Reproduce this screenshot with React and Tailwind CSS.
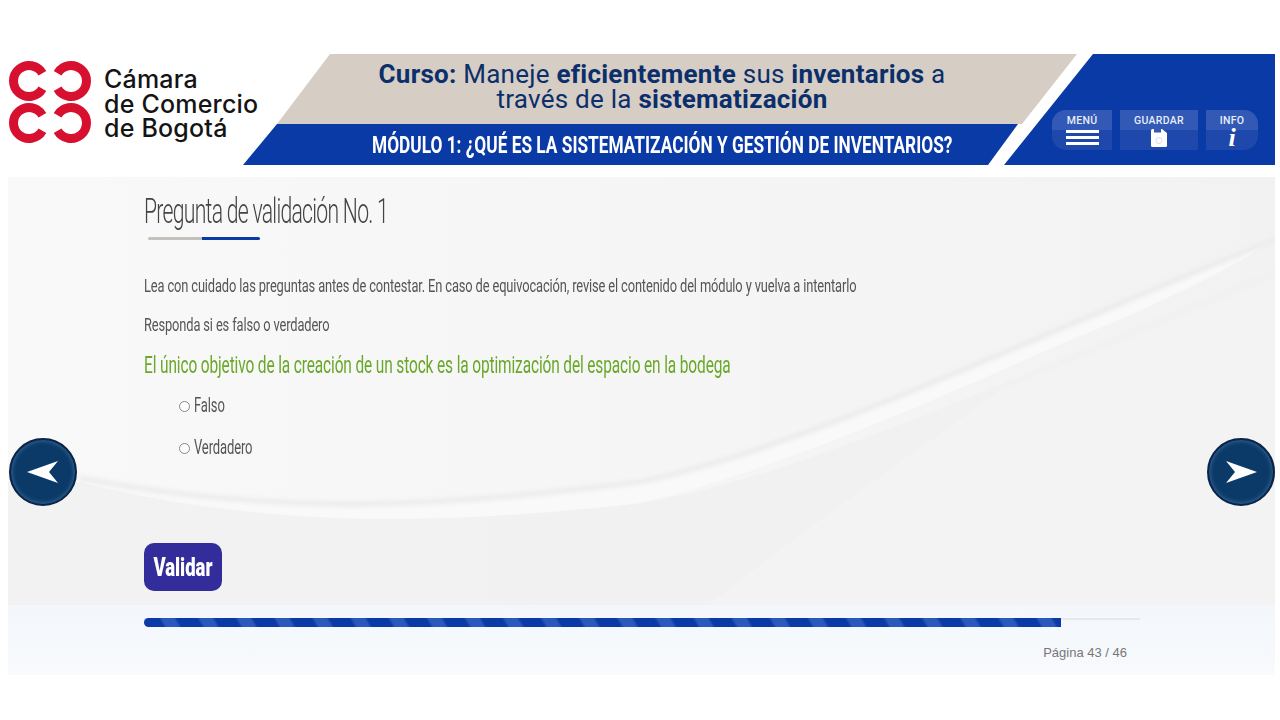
const thin = "font-['Roboto',sans-serif] whitespace-nowrap origin-left"

function LogoMark() {
  return (
    <svg viewBox="0 0 84 84" className="w-[84px] h-[84px] shrink-0" fill="none" stroke="#d8102f" strokeWidth="9">
      <path d="M34.4 13.2A15.5 15.5 0 1 0 34.4 28.8" />
      <path d="M49.6 13.2A15.5 15.5 0 1 1 49.6 28.8" />
      <path d="M34.4 55.2A15.5 15.5 0 1 0 34.4 70.8" />
      <path d="M49.6 55.2A15.5 15.5 0 1 1 49.6 70.8" />
    </svg>
  )
}

function Arrow({ flip }) {
  return (
    <div className="w-[68px] h-[68px] rounded-full bg-[#0c3a68] border-2 border-[#0a2448] shadow-[inset_0_0_5px_rgba(130,180,230,0.5)] flex items-center justify-center">
      <svg viewBox="0 0 32 22" className={flip ? 'w-8 h-[22px] rotate-180' : 'w-8 h-[22px]'}>
        <path d="M0 11L31 0L22 11L31 22Z" fill="#fff" />
      </svg>
    </div>
  )
}

function HeaderButton({ label, width, rounded, children }) {
  return (
    <div className={`${width} h-10 flex flex-col items-center relative`}>
      <div className={`${rounded} absolute inset-0 overflow-hidden bg-[#1e48ab]`}>
        <div className="h-5 bg-[#3159b5]" />
      </div>
      <span className="relative mt-[5px] text-[10.5px] leading-3 font-medium tracking-[0.3px] text-[#e8eefa] font-['Roboto',sans-serif]">{label}</span>
      <div className="relative h-[21px] flex items-center justify-center">{children}</div>
    </div>
  )
}

export default function App() {
  return (
    <div className="w-[1280px] h-[720px] bg-white overflow-hidden pt-[54px] pl-2 pr-[5px]">
      {/* Header */}
      <div className="flex h-[111px]">
        <div className="w-[235px] shrink-0 flex items-start pt-[6px]">
          <LogoMark />
          <div className="ml-[12px] mt-[7px] text-[25px] leading-[24.5px] font-medium text-[#141414] font-['Inter',sans-serif] tracking-[0.2px] whitespace-nowrap">
            <div>Cámara</div>
            <div>de Comercio</div>
            <div>de Bogotá</div>
          </div>
        </div>
        <div className="w-[834px] shrink-0 flex flex-col">
          <div className="ml-[34px] h-[70px] bg-[#d6cdc5] [clip-path:polygon(53px_0,100%_0,calc(100%-55px)_100%,0_100%)] flex flex-col items-center pt-[8px] pr-[30px]">
            <div className="text-[26px] leading-[25px] text-[#0b2f6b] font-['Roboto',sans-serif] tracking-[0.25px] text-center whitespace-nowrap">
              <div><b>Curso:</b> Maneje <b>eficientemente</b> sus <b>inventarios</b> a</div>
              <div>través de la <b>sistematización</b></div>
            </div>
          </div>
          <div className="w-[775px] h-[41px] bg-[#0a3aa6] [clip-path:polygon(34px_0,100%_0,calc(100%-30px)_100%,0_100%)] pl-[129px] flex items-center">
            <span className="text-[24px] font-bold text-white font-['Roboto',sans-serif] whitespace-nowrap origin-left scale-x-[0.72]">MÓDULO 1: ¿QUÉ ES LA SISTEMATIZACIÓN Y GESTIÓN DE INVENTARIOS?</span>
          </div>
        </div>
        <div className="ml-[-73px] flex-1 h-[111px] bg-[#0a3aa6] [clip-path:polygon(89px_0,100%_0,100%_100%,0_100%)] flex items-start gap-2 pt-[56px] pl-[48px]">
          <HeaderButton label="MENÚ" width="w-[60px]" rounded="rounded-l-[14px]">
            <div className="flex flex-col gap-[3px]">
              <div className="w-[33px] h-[3px] bg-white" />
              <div className="w-[33px] h-[3px] bg-white" />
              <div className="w-[33px] h-[3px] bg-white" />
            </div>
          </HeaderButton>
          <HeaderButton label="GUARDAR" width="w-[78px]">
            <svg viewBox="0 0 16 18" className="w-4 h-[18px]">
              <path d="M1.5 0H11L16 4V16.5Q16 18 14.5 18H1.5Q0 18 0 16.5V1.5Q0 0 1.5 0Z" fill="#fff" />
              <rect x="3" y="0" width="7" height="3.5" fill="#3159b5" />
              <circle cx="8" cy="11.5" r="3" fill="none" stroke="#d5dcea" />
            </svg>
          </HeaderButton>
          <HeaderButton label="INFO" width="w-[52px]" rounded="rounded-r-[14px]">
            <span className="font-['Liberation_Serif',serif] italic font-bold text-[26px] leading-[21px] text-white">i</span>
          </HeaderButton>
        </div>
      </div>

      {/* Body */}
      <div className="mt-3 h-[428px] relative overflow-hidden bg-gradient-to-r from-[#f9f9f9] to-[#f2f2f2] pl-[136px]">
        {/* background swoosh */}
        <svg viewBox="0 0 1267 428" className="absolute inset-0 w-full h-full">
          <path d="M72 305C250 350 420 350 632 326C800 300 1050 180 1267 92V428H0V305Z" fill="#f0f0f0" opacity="0.8" />
          <path d="M700 428C800 350 900 280 990 215C1100 170 1200 130 1267 100V428Z" fill="#f3f3f3" />
          <path d="M72 301C250 335 400 335 632 305C800 270 1000 170 1267 63C1200 105 1120 140 1055 166C900 235 760 295 632 326C420 350 250 350 72 301Z" fill="#f9f9f9" />
          <path d="M72 301C250 335 400 335 632 305C800 270 1000 170 1267 63" fill="none" stroke="#e9e9e9" strokeWidth="4" className="blur-[2px]" />
        </svg>
        <div className="relative">
          <h1 className={`${thin} font-light mt-[14px] text-[35px] leading-[42px] tracking-[-1.2px] text-[#444] scale-x-[0.605]`}>Pregunta de validación No. 1</h1>
          <div className="flex ml-1 mt-1 w-[112px] h-[3px]">
            <div className="w-[54px] bg-[#c4c0bb] rounded-l-full" />
            <div className="w-[58px] bg-[#0a3aa6] rounded-r-full" />
          </div>
          <p className={`${thin} mt-8 text-[19px] leading-[28px] tracking-[-0.2px] text-[#555] scale-x-[0.678]`}>Lea con cuidado las preguntas antes de contestar. En caso de equivocación, revise el contenido del módulo y vuelva a intentarlo</p>
          <p className={`${thin} mt-[11px] text-[19px] leading-[28px] tracking-[-0.2px] text-[#555] scale-x-[0.678]`}>Responda si es falso o verdadero</p>
          <p className={`${thin} mt-[11px] text-[24px] leading-[30px] tracking-[-0.2px] text-[#6aa82a] scale-x-[0.644]`}>El único objetivo de la creación de un stock es la optimización del espacio en la bodega</p>
          <div className="mt-[11px] ml-[35px] flex flex-col gap-[14px]">
            {['Falso', 'Verdadero'].map((option) => (
              <label key={option} className="flex items-center h-7">
                <span className="w-[11px] h-[11px] rounded-full border border-[#888] bg-white mt-[2px] shrink-0" />
                <span className={`${thin} ml-[4px] text-[20px] tracking-[-0.2px] text-[#555] scale-x-[0.65]`}>{option}</span>
              </label>
            ))}
          </div>
          <button className="mt-[82px] w-[78px] h-12 rounded-[10px] bg-[#332d9b] flex items-center justify-center pt-[2px]">
            <span className="text-[25px] font-black text-white font-['Roboto',sans-serif] scale-x-[0.74]">Validar</span>
          </button>
        </div>
        <div className="absolute left-px top-[261px]"><Arrow /></div>
        <div className="absolute right-0 top-[261px]"><Arrow flip /></div>
      </div>

      {/* Footer */}
      <div className="h-[70px] bg-gradient-to-b from-[#f3f7fc] to-[#f8fafc] pl-[136px] pt-[13px] pr-[135px]">
        <div className="h-[9px] relative">
          <div className="absolute inset-x-0 top-0 h-[2px] bg-[#e6e8ea]" />
          <div className="relative w-[917px] h-[9px] rounded-l-full bg-[repeating-linear-gradient(60deg,#0a3aa6_0,#0a3aa6_17px,#2a58bb_20px,#2a58bb_30px,#0a3aa6_33px)]" />
        </div>
        <div className="mt-[18px] text-right pr-[13px] text-[13px] leading-4 text-[#777] font-['Liberation_Sans',sans-serif]">Página 43 / 46</div>
      </div>
    </div>
  )
}
